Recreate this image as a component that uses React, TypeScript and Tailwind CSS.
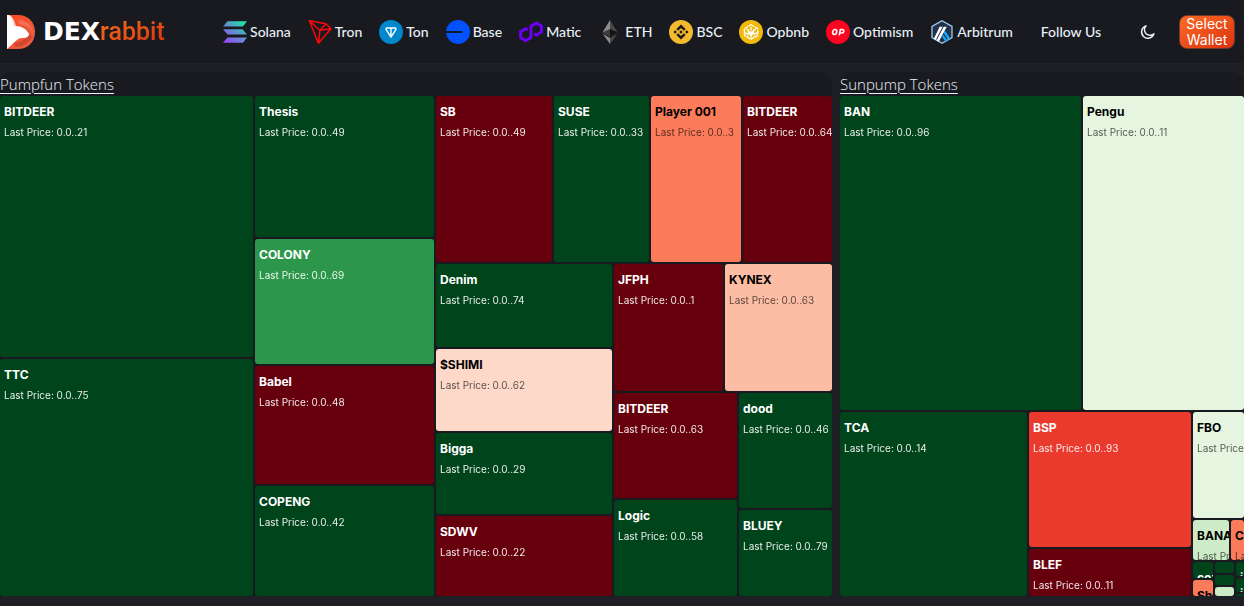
import type { ReactNode } from 'react';

type Leaf = { size: number; tone: Tone; name?: string; price?: string };
type Group = { size: number; dir: 'row' | 'col'; items: Node[] };
type Node = Leaf | Group;

const tones = {
  green: 'bg-[#00441b] text-white',
  mid: 'bg-[#2c974b] text-white',
  maroon: 'bg-[#67000d] text-white',
  red: 'bg-[#ea392d] text-white',
  coral: 'bg-[#fc7b5b] text-black',
  salmon: 'bg-[#fcbda4] text-black',
  blush: 'bg-[#fed8c9] text-black',
  mint: 'bg-[#e5f5e0] text-black',
  sage: 'bg-[#ceebc8] text-black',
};
type Tone = keyof typeof tones;

const leaf = (size: number, tone: Tone, name?: string, price?: string): Leaf => ({ size, tone, name, price });
const row = (size: number, ...items: Node[]): Group => ({ size, dir: 'row', items });
const col = (size: number, ...items: Node[]): Group => ({ size, dir: 'col', items });

const pumpfun = row(
  1,
  col(253, leaf(261, 'green', 'BITDEER', '0.0..21'), leaf(237, 'green', 'TTC', '0.0..75')),
  col(
    179,
    leaf(141, 'green', 'Thesis', '0.0..49'),
    leaf(125, 'mid', 'COLONY', '0.0..69'),
    leaf(118, 'maroon', 'Babel', '0.0..48'),
    leaf(110, 'green', 'COPENG', '0.0..42'),
  ),
  col(
    396,
    row(
      166,
      leaf(116, 'maroon', 'SB', '0.0..49'),
      leaf(95, 'green', 'SUSE', '0.0..33'),
      leaf(90, 'coral', 'Player 001', '0.0..3'),
      leaf(89, 'maroon', 'BITDEER', '0.0..64'),
    ),
    row(
      332,
      col(
        176,
        leaf(83, 'green', 'Denim', '0.0..74'),
        leaf(82, 'blush', '$SHIMI', '0.0..62'),
        leaf(81, 'green', 'Bigga', '0.0..29'),
        leaf(80, 'maroon', 'SDWV', '0.0..22'),
      ),
      col(
        218,
        row(127, leaf(109, 'maroon', 'JFPH', '0.0..1'), leaf(107, 'salmon', 'KYNEX', '0.0..63')),
        row(
          203,
          col(123, leaf(105, 'maroon', 'BITDEER', '0.0..63'), leaf(96, 'green', 'Logic', '0.0..58')),
          col(93, leaf(115, 'green', 'dood', '0.0..46'), leaf(86, 'green', 'BLUEY', '0.0..79')),
        ),
      ),
    ),
  ),
);

const sunpump = col(
  1,
  row(314, leaf(241, 'green', 'BAN', '0.0..96'), leaf(161, 'mint', 'Pengu', '0.0..11')),
  row(
    184,
    leaf(187, 'green', 'TCA', '0.0..14'),
    col(162, leaf(135, 'red', 'BSP', '0.0..93'), leaf(47, 'maroon', 'BLEF', '0.0..11')),
    col(
      51,
      leaf(106, 'mint', 'FBO', '0.0..38'),
      row(40, leaf(36, 'sage', 'BANANA', '0.0..25'), leaf(13, 'coral', 'CAT', '0.0..17')),
      row(
        34,
        col(20, leaf(16, 'green', 'cozy'), leaf(16, 'coral', 'Shib')),
        col(19, leaf(11, 'green'), leaf(10, 'green'), leaf(9, 'sage')),
        col(8, leaf(14, 'green', 'i'), leaf(14, 'green', 'i'), leaf(2, 'green')),
      ),
    ),
  ),
);

function Tile({ node }: { node: Node }) {
  const style = { flexGrow: node.size };
  if ('items' in node) {
    return (
      <div
        style={style}
        className={`flex min-h-0 min-w-0 basis-0 gap-[2px] ${node.dir === 'row' ? 'flex-row' : 'flex-col'}`}
      >
        {node.items.map((item, i) => (
          <Tile key={i} node={item} />
        ))}
      </div>
    );
  }
  const dim = tones[node.tone].includes('text-black') ? 'opacity-65' : 'opacity-90';
  return (
    <div style={style} className={`min-h-0 min-w-0 basis-0 overflow-hidden rounded-[3px] whitespace-nowrap ${tones[node.tone]}`}>
      {node.name && <h3 className="px-1 pt-2 text-[12px] leading-4 font-bold">{node.name}</h3>}
      {node.price && <p className={`px-1 pt-1 text-[10px] leading-4 ${dim}`}>Last Price: {node.price}</p>}
    </div>
  );
}

function Panel({ title, tree, size }: { title: string; tree: Group; size: number }) {
  return (
    <section style={{ flexGrow: size }} className="min-w-0 basis-0 overflow-hidden rounded-t-xl bg-[#191a1f]">
      <h2 className="h-6 text-[15px] leading-6 font-light">
        <a href="#tokens" className="underline underline-offset-3">
          {title}
        </a>
      </h2>
      <div className="flex h-[500px] font-[Inter,sans-serif]">
        <Tile node={tree} />
      </div>
    </section>
  );
}

function Icon({ children }: { children: ReactNode }) {
  return (
    <svg viewBox="0 0 24 24" className="size-6 shrink-0" fill="none" aria-hidden="true">
      {children}
    </svg>
  );
}

const chains: { name: string; icon: ReactNode }[] = [
  {
    name: 'Solana',
    icon: (
      <>
        <defs>
          <linearGradient id="sol" x1="22" y1="1" x2="4" y2="24" gradientUnits="userSpaceOnUse">
            <stop stopColor="#14f0a0" />
            <stop offset=".45" stopColor="#5a98c8" />
            <stop offset="1" stopColor="#9b45ff" />
          </linearGradient>
        </defs>
        <path d="M4.5 1.2H24l-4 5.3H0zM0 9.2h19.5l4.500 5.300H4.500zM4.500 17.500H24l-4 5.300H0z" fill="url(#sol)" />
      </>
    ),
  },
  {
    name: 'Tron',
    icon: (
      <path
        d="M1.3.7 18 3.8l5 5-12.6 14.4zM1.3.7l10.6 9.5L18 3.8M11.9 10.2 23 8.8M11.9 10.2l-1.5 13"
        stroke="#ff060a"
        strokeWidth="1.5"
        strokeLinejoin="round"
      />
    ),
  },
  {
    name: 'Ton',
    icon: (
      <>
        <circle cx="12" cy="12" r="12" fill="#0088cc" />
        <path d="M7.4 8h9.2l.5 1.2-5.1 8-5.1-8zM12 8v9" stroke="#fff" strokeWidth="1.4" strokeLinejoin="round" />
      </>
    ),
  },
  {
    name: 'Base',
    icon: <path d="M12 0a12 12 0 1 1-11.9 13H16v-2H.1A12 12 0 0 1 12 0z" fill="#0052ff" />,
  },
  {
    name: 'Matic',
    icon: (
      <path
        d="M8.8 10 6.5 8.700 1.600 11.700v6l4.900 3 5.500-3.200V6.200L17.500 3l4.900 3v6l-4.900 3-2.300-1.300"
        stroke="#6c00f6"
        strokeWidth="3"
      />
    ),
  },
  {
    name: 'ETH',
    icon: (
      <>
        <path d="M12 0v16.4l-7.4-4.2z" fill="#8c8c8c" />
        <path d="M12 0v16.4l7.4-4.2z" fill="#494949" />
        <path d="M12 9v7.4l-7.4-4.2z" fill="#3c3c3b" />
        <path d="M12 9v7.4l7.4-4.2z" fill="#141414" />
        <path d="M12 17.9V24L4.6 13.7z" fill="#8c8c8c" />
        <path d="M12 17.9V24l7.4-10.3z" fill="#4a4a49" />
      </>
    ),
  },
  {
    name: 'BSC',
    icon: (
      <>
        <circle cx="12" cy="12" r="12" fill="#f3ba2f" />
        <path
          d="m9.1 10.8 2.9-2.9 2.9 2.9 1.7-1.7L12 4.5 7.4 9.1zM4.5 12l1.7-1.7L7.9 12l-1.7 1.7zM9.1 13.2 12 16.1l2.9-2.9 1.7 1.7-4.6 4.6-4.6-4.6zM16.1 12l1.7-1.7 1.7 1.7-1.7 1.7zM10.3 12l1.7-1.7 1.7 1.7-1.7 1.7z"
          fill="#191a1f"
        />
      </>
    ),
  },
  {
    name: 'Opbnb',
    icon: (
      <>
        <circle cx="12" cy="12" r="12" fill="#f0b90b" />
        <path
          d="m12 4.800 6.600 3.700v7L12 19.200l-6.600-3.700v-7zM7.200 8.800l3 1.900M16.800 8.800l-3 1.900M12 7v3.400M5.600 12.600l3 1.600v2.600M18.400 12.600l-3 1.600v2.600M12 13.500v5.300"
          stroke="#fff"
          strokeWidth="1.3"
          strokeDasharray="4 .6"
        />
        <path d="m8.800 10.200 3.200 1.600 3.200-1.600v3.600L12 16l-3.200-2.200z" fill="#fff" />
      </>
    ),
  },
  {
    name: 'Optimism',
    icon: (
      <>
        <circle cx="12" cy="12" r="12" fill="#ff0420" />
        <g stroke="#fff" strokeWidth="1.600">
          <ellipse cx="8.700" cy="12" rx="2" ry="2.500" transform="rotate(16 8.700 12)" />
          <path d="m13.200 15.300 1.200-5.700h2c2.300 0 1.700 3.400-.6 3.400h-1.800" />
        </g>
      </>
    ),
  },
  {
    name: 'Arbitrum',
    icon: (
      <>
        <path d="m12 .8 10 5.700v11L12 23.200 2 17.500V6.500z" fill="#213147" stroke="#9dcced" strokeWidth="1.3" />
        <path d="m14.900 10.500 5.300 8-2 1.200-4.600-6.700zM13 14.500l4.500 5.900-1.900 1.200-3.500-4.700z" fill="#12aaff" />
        <path d="M9.600 6.800h3L5.800 20l-2-1.200zM13.700 6.800h3L8.800 21.700l-2.200-1.200z" fill="#fff" />
      </>
    ),
  },
];

function Logo() {
  return (
    <a href="#home" aria-label="DEXrabbit" className="flex items-center">
      <svg viewBox="0 0 28 34" className="mr-2 h-[34px] w-7" aria-hidden="true">
        <defs>
          <linearGradient id="ear" x1="0" y1="0" x2="1" y2="1">
            <stop stopColor="#ff4a1f" />
            <stop offset="1" stopColor="#e4604a" />
          </linearGradient>
        </defs>
        <path d="M0 0h11c10 0 17 7 17 17s-7 17-17 17H0z" fill="url(#ear)" />
        <path d="M11 5c8 0 14 5 15 13-3-6-8-8-14-9z" fill="#f5806a" opacity=".6" />
        <path d="M7 28c7-1 12-4 15-9l4 2c-3 6-9 11-17 11z" fill="#c23a26" opacity=".6" />
        <path d="M0 0h2c4 2 6 6 7 11 3 0 6 1 9 3 2 2 4 4 4 6-1 2-3 3-5 3-3 0-5 0-7 2-4 3-6 6-10 9z" fill="#fff" />
        <path d="M4 0c4 3 6 7 5.500 11L7 11C7 6 5 3 2.500 0z" fill="#ff4a1f" opacity=".35" />
      </svg>
      <span className="font-['DejaVu_Sans',sans-serif] text-[25px] leading-8 font-bold text-white">DEX</span>
      <span className="bg-linear-to-br from-[#f8701c] to-[#d92a0c] bg-clip-text font-[Roboto,sans-serif] text-[25px] leading-8 font-medium text-transparent">
        rabbit
      </span>
    </a>
  );
}

export default function App() {
  return (
    <div className="min-h-screen overflow-hidden bg-[#1e1f25] font-['Open_Sans',sans-serif] text-[#e8f0f8]">
      <header className="flex h-16 items-center border-b border-[#212228] bg-[#191a1f] pr-[9px] pl-[7px] font-[Lato,sans-serif] text-[14px] font-medium">
        <Logo />
        <nav className="ml-auto flex items-center gap-[17px] pr-[39px]">
          {chains.map((chain) => (
            <a key={chain.name} href={`#${chain.name.toLowerCase()}`} className="flex items-center gap-[3px]">
              <Icon>{chain.icon}</Icon>
              {chain.name}
            </a>
          ))}
          <a href="#follow" className="ml-[11px]">
            Follow Us
          </a>
        </nav>
        <button type="button" aria-label="Toggle theme" className="mr-[23px]">
          <svg viewBox="0 0 24 24" className="size-4" fill="none" stroke="currentColor" strokeWidth="2.2" strokeLinejoin="round" aria-hidden="true">
            <path d="M21 14.500A9.500 9.500 0 1 1 9 2.800a8 8 0 0 0 12 11.700z" />
          </svg>
        </button>
        <button
          type="button"
          className="w-14 rounded-lg border border-[#6b3a2c] bg-linear-to-br from-[#fb6a24] to-[#dc2f10] font-[Inter,sans-serif] text-[14px] leading-4 font-normal text-white"
        >
          Select Wallet
        </button>
      </header>
      <main className="flex gap-2 pt-2">
        <Panel title="Pumpfun Tokens" tree={pumpfun} size={832} />
        <Panel title="Sunpump Tokens" tree={sunpump} size={404} />
      </main>
    </div>
  );
}
